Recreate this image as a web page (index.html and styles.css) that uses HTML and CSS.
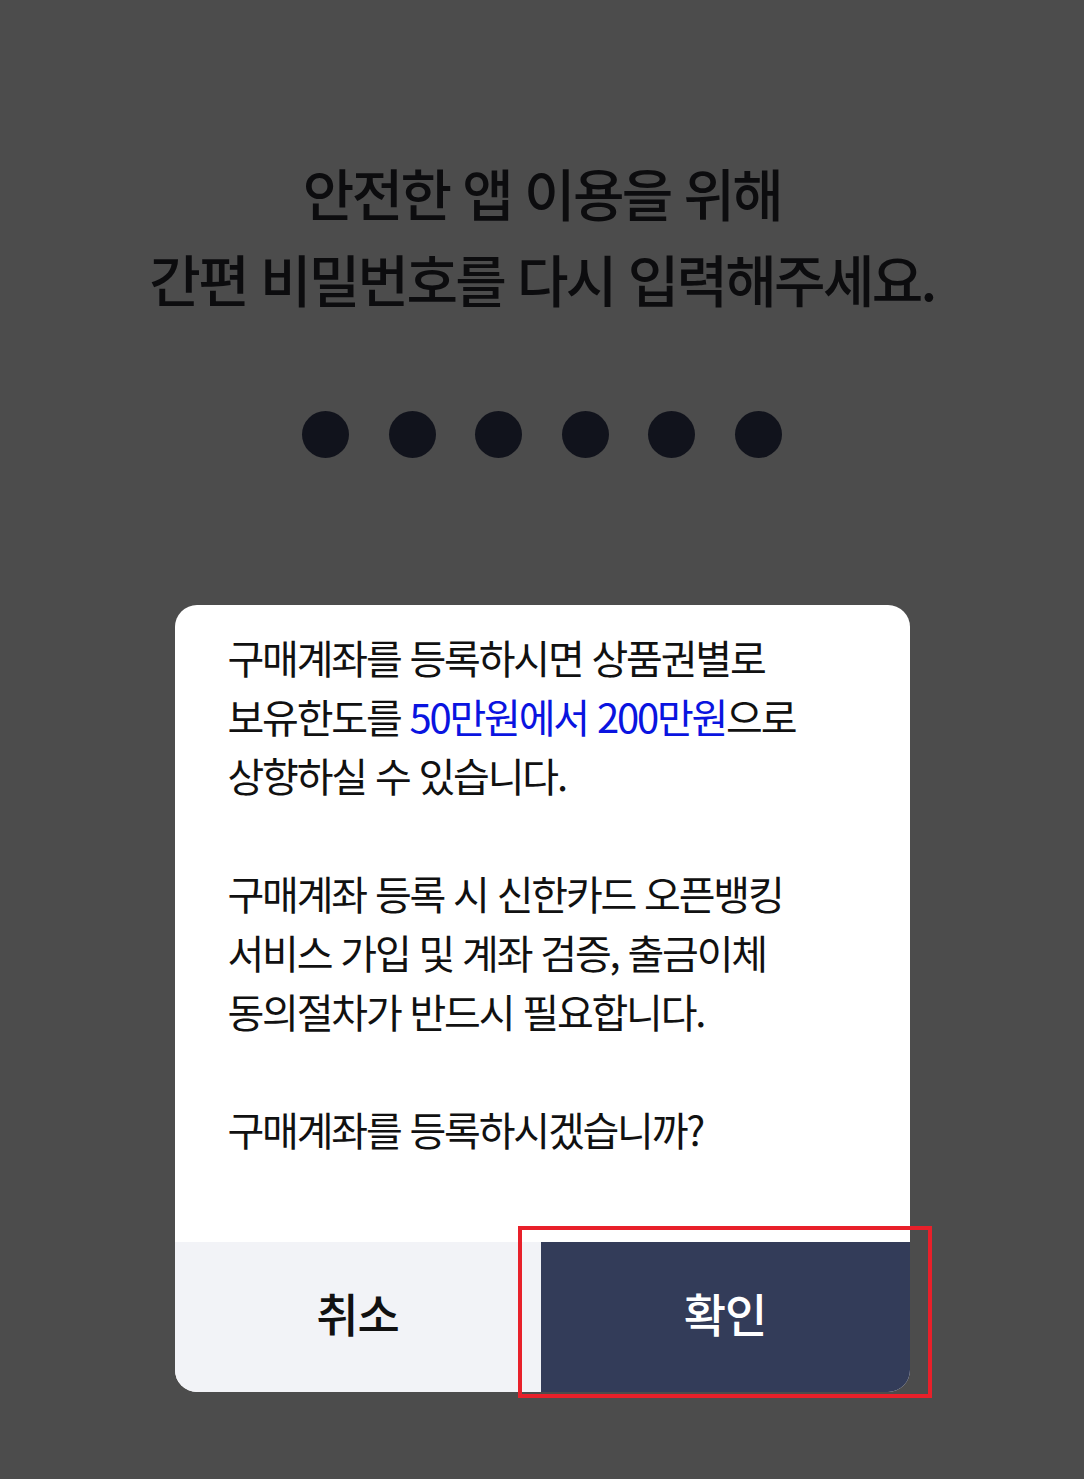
FILE: index.html
```html
<!DOCTYPE html>
<html lang="ko">
<head>
<meta charset="utf-8">
<link rel="stylesheet" href="styles.css">
</head>
<body>
<div class="screen">
  <h1 class="title">안전한 앱 이용을 위해<br>간편 비밀번호를 다시 입력해주세요.</h1>
  <div class="dots">
    <span class="dot"></span><span class="dot"></span><span class="dot"></span>
    <span class="dot"></span><span class="dot"></span><span class="dot"></span>
  </div>
  <div class="dialog">
    <div class="dialog-body">
      <p>구매계좌를 등록하시면 상품권별로<br>보유한도를 <span class="hl">50만원에서 200만원</span>으로<br>상향하실 수 있습니다.</p>
      <p>구매계좌 등록 시 신한카드 오픈뱅킹<br>서비스 가입 및 계좌 검증, 출금이체<br>동의절차가 반드시 필요합니다.</p>
      <p>구매계좌를 등록하시겠습니까?</p>
    </div>
    <div class="dialog-actions">
      <button class="btn btn-cancel">취소</button>
      <button class="btn btn-ok">확인</button>
      <div class="highlight-box"></div>
    </div>
  </div>
</div>
</body>
</html>
```
FILE: styles.css
```css
html, body {
  margin: 0;
  padding: 0;
  background: #4c4c4c;
}
body {
  font-family: "Noto Sans CJK KR", "Noto Sans", sans-serif;
  width: 1084px;
  height: 1479px;
  overflow: hidden;
}
.screen {
  padding-top: 149px;
  display: flex;
  flex-direction: column;
  align-items: center;
}
.title {
  margin: 0;
  font-size: 56px;
  font-weight: 500;
  line-height: 86px;
  letter-spacing: -2.7px;
  color: #0c0c0e;
  text-align: center;
}
.dots {
  margin-top: 90px;
  display: flex;
  gap: 39.6px;
}
.dot {
  width: 47px;
  height: 47px;
  border-radius: 50%;
  background: #11131c;
}
.dialog {
  margin-top: 147px;
  width: 735px;
  background: #ffffff;
  border-radius: 22px;
}
.dialog-body {
  padding: 23px 30px 83px 53px;
}
.dialog-body p {
  margin: 0 0 59px;
  font-size: 40px;
  line-height: 59px;
  letter-spacing: -2.2px;
  color: #111111;
}
.dialog-body p:last-child {
  margin-bottom: 0;
}
.hl {
  color: #0a14e0;
}
.dialog-actions {
  position: relative;
  display: flex;
  height: 150px;
}
.btn {
  border: 0;
  margin: 0;
  padding: 0 0 10px;
  font-family: inherit;
  font-size: 46px;
  font-weight: 500;
  letter-spacing: -1px;
  cursor: pointer;
}
.btn-cancel {
  width: 366px;
  background: #f2f3f7;
  color: #111111;
  border-bottom-left-radius: 22px;
}
.btn-ok {
  flex: 1;
  background: #333c59;
  color: #ffffff;
  border-bottom-right-radius: 22px;
}
.highlight-box {
  position: absolute;
  left: 343px;
  top: -16px;
  width: 406px;
  height: 164px;
  border: 4px solid #e8202a;
  pointer-events: none;
}
```
